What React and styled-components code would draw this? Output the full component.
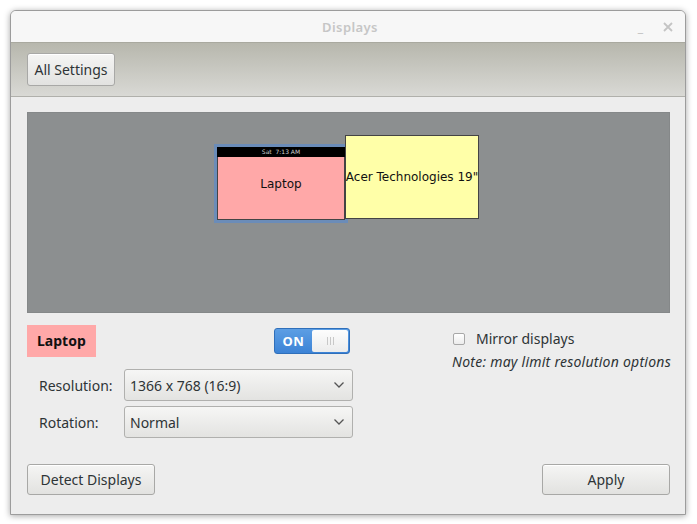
import React, { useState } from 'react';
import styled, { createGlobalStyle } from 'styled-components';

const GlobalStyle = createGlobalStyle`
  html, body {
    margin: 0;
    padding: 0;
    background: #ffffff;
  }
  body {
    font-family: "Noto Sans", "DejaVu Sans", sans-serif;
    font-size: 14px;
    color: #2e3436;
  }
`;

const Chevron = () => (
  <svg width="12" height="8" viewBox="0 0 12 8">
    <path d="M1.5 1.5 L6 6 L10.5 1.5" fill="none" stroke="#555" strokeWidth="1.3" />
  </svg>
);

const App = () => {
  const [mirror, setMirror] = useState(false);

  return (
    <>
      <GlobalStyle />
      <Window>
        <TitleBar>
          <Title>Displays</Title>
          <TitleButtons>
            <TitleButton>_</TitleButton>
            <TitleButton>
              <svg width="10" height="10" viewBox="0 0 10 10">
                <path d="M1 1 L9 9 M9 1 L1 9" stroke="#c4c4c4" strokeWidth="1.8" />
              </svg>
            </TitleButton>
          </TitleButtons>
        </TitleBar>

        <HeaderBar>
          <Button>All Settings</Button>
        </HeaderBar>

        <Content>
          <Arrangement>
            <Monitor left={186} top={31} width={134} height={79} selected>
              <Panel>Sat&nbsp;&nbsp;7:13 AM</Panel>
              <MonitorFace color="#ffa8a8">Laptop</MonitorFace>
            </Monitor>
            <Monitor left={317} top={22} width={134} height={84}>
              <MonitorFace color="#ffffa8">Acer Technologies 19"</MonitorFace>
            </Monitor>
          </Arrangement>

          <Settings>
            <LeftColumn>
              <NameRow>
                <OutputName>Laptop</OutputName>
                <Switch>
                  <SwitchOn>ON</SwitchOn>
                  <SwitchKnob>
                    <Grip />
                    <Grip />
                    <Grip />
                  </SwitchKnob>
                </Switch>
              </NameRow>
              <FormGrid>
                <FieldLabel>Resolution:</FieldLabel>
                <Combo>
                  <span>1366 x 768 (16:9)</span>
                  <Chevron />
                </Combo>
                <FieldLabel>Rotation:</FieldLabel>
                <Combo>
                  <span>Normal</span>
                  <Chevron />
                </Combo>
              </FormGrid>
            </LeftColumn>

            <RightColumn>
              <CheckRow onClick={() => setMirror(!mirror)}>
                <CheckBox checked={mirror} />
                <span>Mirror displays</span>
              </CheckRow>
              <Note>Note: may limit resolution options</Note>
            </RightColumn>
          </Settings>

          <Footer>
            <Button wide>Detect Displays</Button>
            <Button wide>Apply</Button>
          </Footer>
        </Content>
      </Window>
    </>
  );
};

const Window = styled.div`
  margin: 10px;
  width: 674px;
  height: 503px;
  border: 1px solid #9c9c9c;
  border-radius: 6px 6px 0 0;
  background: #ededed;
  box-shadow: 0 1px 6px rgba(0, 0, 0, 0.35);
  display: flex;
  flex-direction: column;
  overflow: hidden;
`;

const TitleBar = styled.div`
  height: 31px;
  flex: none;
  position: relative;
  display: flex;
  align-items: center;
  justify-content: center;
  background: #f7f7f7;
`;

const Title = styled.div`
  color: #c6c6c6;
  font-size: 13px;
  font-weight: 600;
  letter-spacing: 0.4px;
  margin-left: 4px;
`;

const TitleButtons = styled.div`
  position: absolute;
  right: 12px;
  top: 0;
  height: 100%;
  display: flex;
  align-items: center;
  gap: 20px;
`;

const TitleButton = styled.div`
  color: #c4c4c4;
  font-size: 13px;
  font-weight: 700;
  display: flex;
  align-items: center;
  height: 12px;
`;

const HeaderBar = styled.div`
  flex: none;
  height: 55px;
  box-sizing: border-box;
  padding: 0 16px;
  display: flex;
  align-items: center;
  background: linear-gradient(#b7b7ad, #d9d9d5);
  border-top: 1px solid #a9a99f;
  border-bottom: 1px solid #b0b0ab;
`;

const Button = styled.button`
  font-family: "Noto Sans", "DejaVu Sans", sans-serif;
  font-size: 14px;
  color: #2e3436;
  height: ${p => (p.wide ? '31px' : '33px')};
  min-width: ${p => (p.wide ? '128px' : '88px')};
  padding: 0 5px;
  border: 1px solid #a8a8a6;
  border-radius: 3px;
  background: linear-gradient(#f5f5f4, #e2e2e0);
  box-shadow: inset 0 1px 0 #ffffff;
`;

const Content = styled.div`
  flex: 1;
  display: flex;
  flex-direction: column;
  padding: 15px 15px 19px 16px;
`;

const Arrangement = styled.div`
  position: relative;
  height: 201px;
  background: #8c8f90;
  border: 1px solid #858889;
  box-sizing: border-box;
`;

const Monitor = styled.div`
  position: absolute;
  left: ${p => p.left}px;
  top: ${p => p.top}px;
  width: ${p => p.width}px;
  height: ${p => p.height}px;
  box-sizing: border-box;
  display: flex;
  flex-direction: column;
  border: ${p => (p.selected ? '3px solid #6b8cb8' : 'none')};
`;

const Panel = styled.div`
  position: absolute;
  left: 0;
  right: 0;
  top: 0;
  height: 10px;
  z-index: 1;
  background: #000;
  color: #d0d0d0;
  font-family: "DejaVu Sans", sans-serif;
  font-size: 6px;
  line-height: 10px;
  text-align: center;
`;

const MonitorFace = styled.div`
  flex: 1;
  background: ${p => p.color};
  border: 1px solid #444;
  box-sizing: border-box;
  display: flex;
  align-items: center;
  justify-content: center;
  font-family: "DejaVu Sans", sans-serif;
  font-size: 12px;
  color: #111;
  white-space: nowrap;
`;

const Settings = styled.div`
  display: flex;
  justify-content: space-between;
  margin-top: 12px;
`;

const LeftColumn = styled.div`
  width: 326px;
  display: flex;
  flex-direction: column;
`;

const NameRow = styled.div`
  display: flex;
  align-items: center;
  justify-content: space-between;
  height: 32px;
  padding-right: 3px;
`;

const OutputName = styled.div`
  background: #ffa8a8;
  font-weight: 700;
  font-size: 14px;
  color: #111;
  height: 32px;
  line-height: 32px;
  padding: 0 10px;
`;

const Switch = styled.div`
  display: flex;
  width: 76px;
  height: 26px;
  box-sizing: border-box;
  border: 1px solid #2f6fba;
  border-radius: 3px;
  overflow: hidden;
  background: linear-gradient(#5c9ee4, #3c83d6);
`;

const SwitchOn = styled.div`
  width: 37px;
  display: flex;
  align-items: center;
  justify-content: center;
  color: #fff;
  font-weight: 700;
  font-size: 13px;
  letter-spacing: 0.5px;
`;

const SwitchKnob = styled.div`
  flex: 1;
  margin: 1px 1px 1px 0;
  border-radius: 2px;
  background: linear-gradient(#fdfdfd, #ececec);
  display: flex;
  align-items: center;
  justify-content: center;
  gap: 2px;
`;

const Grip = styled.div`
  width: 1px;
  height: 8px;
  background: #c8c8c8;
`;

const FormGrid = styled.div`
  display: grid;
  grid-template-columns: 73px 229px;
  column-gap: 12px;
  row-gap: 5px;
  align-items: center;
  margin-top: 12px;
  padding-left: 12px;
`;

const FieldLabel = styled.div`
  color: #2e3436;
`;

const Combo = styled.div`
  height: 32px;
  box-sizing: border-box;
  border: 1px solid #b0b0ae;
  border-radius: 3px;
  background: linear-gradient(#f6f6f5, #e3e3e1);
  display: flex;
  align-items: center;
  justify-content: space-between;
  padding: 0 7px 0 5px;
`;

const RightColumn = styled.div`
  display: flex;
  flex-direction: column;
  padding-top: 4px;
  margin-right: -1px;
`;

const CheckRow = styled.div`
  display: flex;
  align-items: center;
  gap: 11px;
  padding-left: 1px;
  cursor: pointer;
`;

const CheckBox = styled.div`
  width: 12px;
  height: 12px;
  box-sizing: border-box;
  border: 1px solid #a8a8a8;
  border-radius: 2px;
  background: ${p => (p.checked ? '#4a90d9' : 'linear-gradient(#ffffff, #ececec)')};
`;

const Note = styled.div`
  font-style: italic;
  letter-spacing: 0.25px;
  margin-top: 4px;
`;

const Footer = styled.div`
  margin-top: auto;
  display: flex;
  justify-content: space-between;
`;

export default App;
